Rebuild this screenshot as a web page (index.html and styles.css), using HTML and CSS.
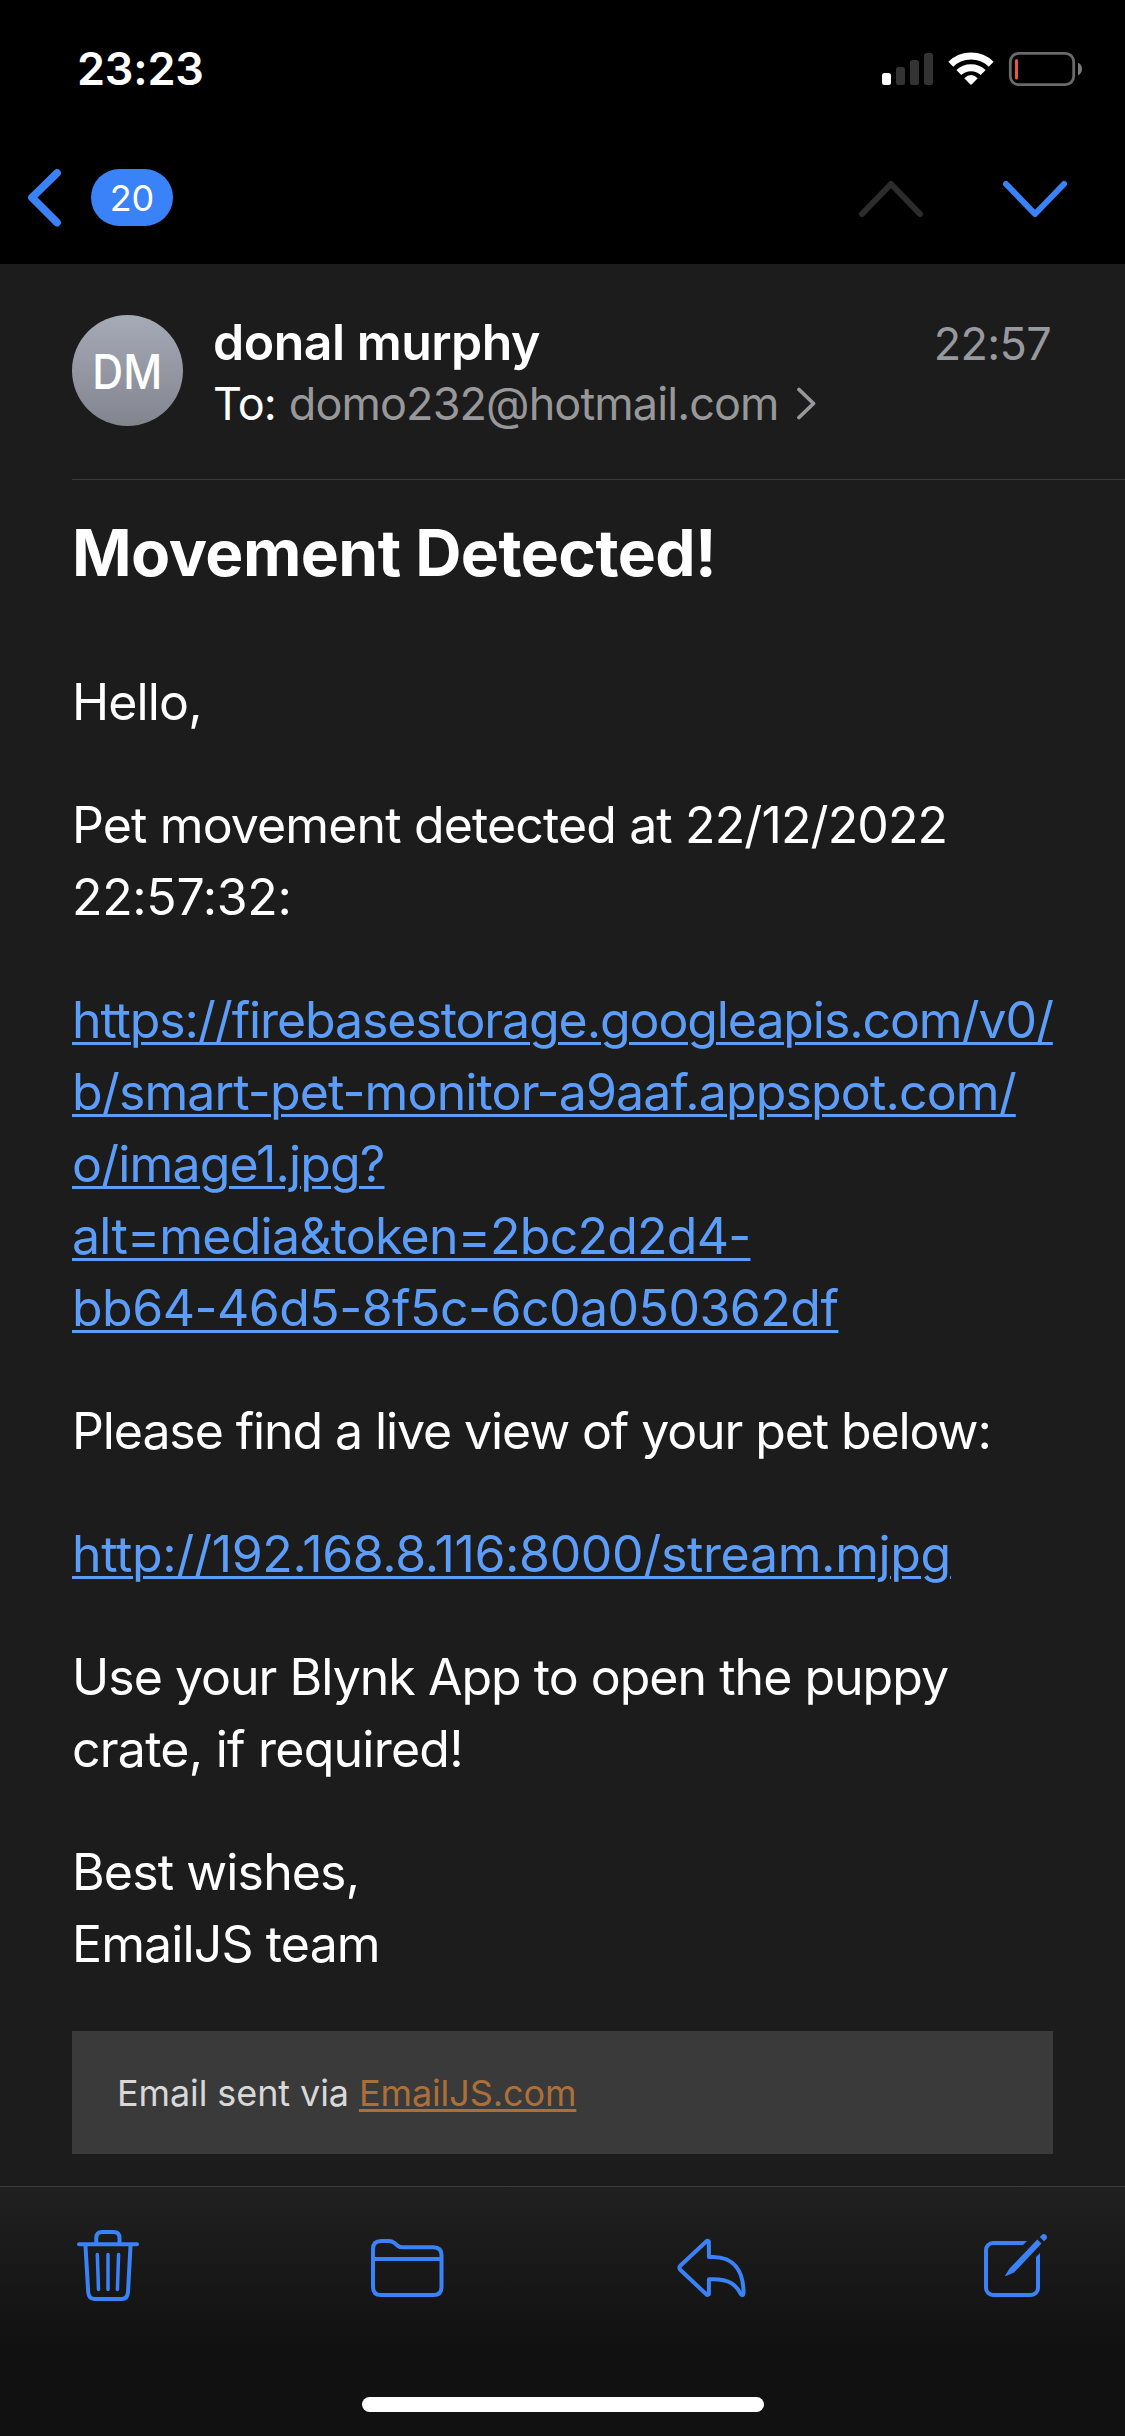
FILE: index.html
```html
<!DOCTYPE html>
<html lang="en">
<head>
<meta charset="utf-8">
<title>Mail</title>
<link rel="stylesheet" href="styles.css">
</head>
<body>
<div class="screen">
  <header class="top">
    <div class="status">
      <span class="clock">23:23</span>
      <svg class="status-icons" width="204" height="36" viewBox="880 51 204 36">
        <rect x="882" y="73" width="9" height="12" rx="2.5" fill="#fff"/>
        <g fill="#333"><rect x="896" y="67" width="9" height="18" rx="2.5"/><rect x="910" y="60" width="9" height="25" rx="2.5"/><rect x="924" y="53" width="9" height="32" rx="2.5"/></g>
        <g fill="none" stroke="#fff" stroke-width="7"><path d="M950.8 64.2A29 29 0 0 1 991.2 64.2"/><path d="M958.8 72.6A17.5 17.5 0 0 1 983.2 72.6"/></g>
        <path d="M964.3 78.2Q971 71.6 977.7 78.2L971.9 84.3Q971 85.2 970.1 84.3Z" fill="#fff"/>
        <rect x="1010.3" y="53.3" width="63.4" height="31.4" rx="8.5" fill="none" stroke="#6a6a6a" stroke-width="2.8"/>
        <path d="M1078 62.7Q1082 64.5 1082 69T1078 75.3Z" fill="#7a7a7a"/>
        <rect x="1015" y="59" width="3" height="20.5" rx="1.5" fill="#eb5545"/>
      </svg>
    </div>
    <nav class="nav">
      <svg width="34" height="58" viewBox="28 169 34 58"><path d="M57 173L32 197.5L57 222.5" class="line blue" stroke-width="7.8"/></svg>
      <span class="count">20</span>
      <svg class="up" width="66" height="40" viewBox="858 179 66 40"><path d="M862 214L891 184L920 214" class="line dim" stroke-width="6"/></svg>
      <svg class="down" width="66" height="40" viewBox="1002 179 66 40"><path d="M1006 184L1035 214L1064 184" class="line blue" stroke-width="6"/></svg>
    </nav>
  </header>
  <main class="mail">
    <section class="sender">
      <div class="avatar"><span class="initials">DM</span></div>
      <div class="who">
        <div class="row"><span class="name">donal murphy</span><time class="sent">22:57</time></div>
        <div class="to"><span class="to-label">To:</span><span class="address">domo232@hotmail.com</span>
          <svg width="20" height="34" viewBox="797 388 20 34"><path d="M800 390.5L814.5 404.5L800 418.5" class="line gray" stroke-width="3.8"/></svg>
        </div>
      </div>
    </section>
    <h1 class="subject">Movement Detected!</h1>
    <div class="body">
      <p>Hello,</p>
      <p>Pet movement detected at 22/12/2022<br><span class="digits">22:57:32:</span></p>
      <p><a class="link"><span class="snug">https://firebasestorage.googleapis.com/v0/</span><br>b/smart-pet-monitor-a9aaf.appspot.com/<br>o/image1.jpg?<br><span class="mixed">alt=media&amp;token=2bc2d2d4-</span><br><span class="hex">bb64-46d5-8f5c-6c0a050362df</span></a></p>
      <p class="snug">Please find a live view of your pet below:</p>
      <p><a class="link digits">http://192.168.8.116:8000/stream.mjpg</a></p>
      <p><span class="tight">Use your Blynk App to open the puppy</span><br><span class="mixed">crate, if required!</span></p>
      <p>Best wishes,<br>EmailJS team</p>
    </div>
    <footer class="via">Email sent via <a class="via-link">EmailJS.com</a></footer>
  </main>
  <div class="bottom">
    <div class="toolbar">
      <svg width="64" height="72" viewBox="76 2230 64 72">
        <g class="line blue" stroke-width="4"><path d="M79 2244.3H137M96.3 2244V2238Q96.3 2232 102.3 2232H113.5Q119.5 2232 119.5 2238V2244M85.5 2246L88.2 2292Q88.7 2299 94.5 2299H122Q127.5 2299 128 2292L130.5 2246"/><path d="M97.3 2254.5L98.5 2289.5M108 2254.5V2289.5M118.6 2254.5L117.4 2289.5" stroke-width="3.5"/></g>
      </svg>
      <svg class="folder" width="74" height="60" viewBox="370 2238 74 60"><path d="M373 2259H441.5M373 2249Q373 2241 381 2241H389Q392 2241 394.5 2243L398 2246Q400 2247.3 402.5 2247.3H433.5Q441.5 2247.3 441.5 2255.3V2287Q441.5 2295 433.5 2295H381Q373 2295 373 2287Z" class="line blue" stroke-width="4"/></svg>
      <svg class="reply" width="72" height="60" viewBox="675 2238 72 60"><path d="M708.9 2241.5Q707.5 2240.3 706 2241.7L680.5 2265.5Q678.3 2267.7 680.5 2270L706 2294Q707.5 2295.5 708.9 2294.3V2279.2H713C730 2279.2 736 2285 740.5 2293.5Q741.5 2295.3 743 2294.8Q743.7 2294.3 743.5 2291C743 2271 734 2257 713 2257H708.9Z" class="line blue" stroke-width="4"/></svg>
      <svg class="compose" width="66" height="66" viewBox="983 2233 66 66">
        <clipPath id="sheet"><path d="M983 2233H1035L1015 2253L1025 2268L1049 2244V2299H983Z"/></clipPath>
        <rect x="986" y="2243" width="52" height="52" rx="7" fill="none" class="blue" stroke-width="4" clip-path="url(#sheet)"/>
        <path d="M1037.3 2239.5L1041.5 2243.5L1014 2272.5L1005.5 2276.2Q1005 2276 1005.2 2275.4L1009.5 2268.5ZM1039.8 2237L1042 2234.8Q1044 2233.3 1046 2235.1Q1048 2237.2 1046.3 2239.2L1044 2241.3Z" fill="#3a82f7"/>
      </svg>
    </div>
    <div class="home"></div>
  </div>
</div>
</body>
</html>
```
FILE: styles.css
```css
* { box-sizing: border-box; }
body { margin: 0; background: #1c1c1c; font-family: Inter, "Liberation Sans", sans-serif; color: #fff; }
svg { display: block; flex: none; }
.screen { width: 1125px; height: 2436px; display: flex; flex-direction: column; overflow: hidden; }
.line { fill: none; stroke-linecap: round; stroke-linejoin: round; }
.blue { stroke: #3a82f7; }
.dim { stroke: #2c2c2c; }
.gray { stroke: #98989a; }

.top { height: 264px; background: #000; flex: none; }
.status { display: flex; justify-content: space-between; align-items: center; height: 138px; padding: 0 41px 0 77px; }
.clock { font-size: 45px; font-weight: 600; line-height: 54px; letter-spacing: -0.2px; }
.nav { display: flex; align-items: center; padding: 30px 57px 0 28px; height: 89px; }
.count { width: 82px; height: 57px; margin-left: 29px; border-radius: 29px; background: #3a82f7; font-size: 36px; font-weight: 400; line-height: 59px; text-align: center; }
.up { margin: 3px 0 0 auto; }
.down { margin: 3px 0 0 78px; }

.mail { flex: 1; padding-left: 72px; }
.sender { display: flex; gap: 30px; height: 216px; padding: 51px 75px 0 0; border-bottom: 1px solid #3c3c3c; }
.avatar { width: 111px; height: 111px; flex: none; border-radius: 50%; background: linear-gradient(#a6aab7, #82858e); font-size: 48px; font-weight: 500; line-height: 113px; text-align: center; }
.initials { display: inline-block; transform: scaleX(0.89); }
.who { flex: 1; }
.row { display: flex; justify-content: space-between; align-items: baseline; height: 60px; line-height: 60px; margin-top: -3px; }
.name { font-size: 50px; font-weight: 600; letter-spacing: -0.5px; }
.sent { font-size: 45px; color: #98989f; letter-spacing: -0.7px; margin-right: -1px; }
.to { display: flex; align-items: center; height: 64px; font-size: 45px; line-height: 64px; letter-spacing: -0.9px; }
.address { color: #98989a; margin: 0 17px 0 13px; }
.subject { margin: 33px 0 0; font-size: 64px; line-height: 80px; font-weight: 700; letter-spacing: -0.54px; }
.body { padding-top: 73px; font-size: 50px; line-height: 72px; letter-spacing: -0.87px; white-space: nowrap; }
.body p { margin: 0 0 51px; }
.body .snug { letter-spacing: -1.1px; }
.tight { letter-spacing: -0.98px; }
.mixed { letter-spacing: -0.76px; }
.hex { letter-spacing: -0.52px; }
.digits { letter-spacing: -0.35px; }
.link { color: #5b9df9; text-decoration: underline; text-decoration-thickness: 3px; text-underline-offset: 4px; }
.via { width: 981px; height: 123px; background: #3a3a3a; padding: 0 45px; font-size: 36px; line-height: 125px; color: #d8d8d8; letter-spacing: -0.1px; white-space: pre; }
.via-link { color: #ad6f38; text-decoration: underline; text-decoration-thickness: 3px; text-underline-offset: 3px; }

.bottom { height: 250px; flex: none; border-top: 1px solid #3c3c3c; background: linear-gradient(#202020, #111 65%); }
.toolbar { display: flex; gap: 230px; align-items: flex-end; height: 115px; padding-left: 76px; }
.folder { margin-bottom: 4px; }
.reply { margin: 0 0 4px 1px; }
.compose { margin: 0 0 3px 6px; }
.home { width: 402px; height: 15px; margin: 95px auto 0; border-radius: 8px; background: #fff; }
```
